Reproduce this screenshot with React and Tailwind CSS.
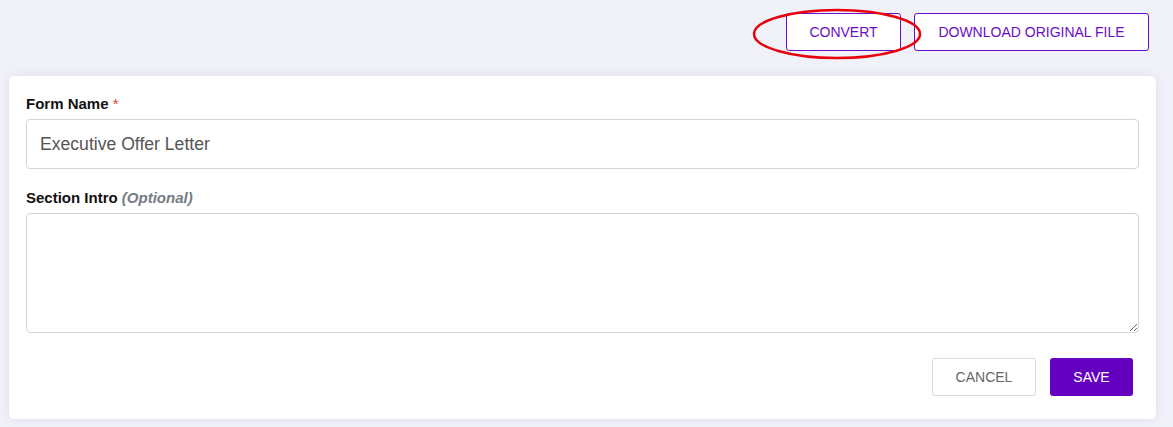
export default function App() {
  return (
    <div className="min-h-[427px] bg-[#f1f1fa] font-['Liberation_Sans',Arial,sans-serif] pt-[13px] pb-[9px]">
      {/* Top actions */}
      <div className="relative flex justify-end gap-[13px] pr-[24px]">
        <button className="h-[38px] w-[115px] rounded-[3px] border border-[#6a0dc6] bg-white text-[14px] text-[#6a0dc6]">
          CONVERT
        </button>
        <button className="h-[38px] w-[235px] rounded-[3px] border border-[#6a0dc6] bg-white text-[14px] text-[#6a0dc6]">
          DOWNLOAD ORIGINAL FILE
        </button>
        <svg
          className="pointer-events-none absolute left-[750px] top-[-7px]"
          width="174"
          height="56"
          viewBox="0 0 174 56"
        >
          <ellipse cx="87" cy="28" rx="83" ry="24" fill="none" stroke="#e8000b" strokeWidth="2.5" />
        </svg>
      </div>

      {/* Card */}
      <div className="ml-[9px] mr-[17px] mt-[25px] rounded-[5px] bg-white px-[17px] pt-[17px] pb-[23px] shadow-[0_0_10px_rgba(90,90,140,0.12)]">
        <label className="block text-[15px] leading-[22px] font-bold text-[#111]">
          Form Name <span className="text-[#e53935] font-normal">*</span>
        </label>
        <div className="mt-[4px] flex h-[50px] items-center rounded-[4px] border border-[#d4d4d8] px-[13px] text-[17.6px] text-[#555]">
          Executive Offer Letter
        </div>

        <label className="mt-[18px] block text-[15px] leading-[22px] font-bold text-[#111]">
          Section Intro <i className="text-[#757b85]">(Optional)</i>
        </label>
        <textarea className="mt-[4px] block h-[120px] w-full rounded-[4px] border border-[#d4d4d8] outline-none" />

        <div className="mt-[25px] flex justify-end gap-[14px] pr-[6px]">
          <button className="h-[38px] w-[104px] rounded-[2px] border border-[#dcdcdc] bg-white text-[14px] text-[#666]">
            CANCEL
          </button>
          <button className="h-[38px] w-[83px] rounded-[3px] bg-[#6400c0] text-[14px] text-white">
            SAVE
          </button>
        </div>
      </div>
    </div>
  );
}
